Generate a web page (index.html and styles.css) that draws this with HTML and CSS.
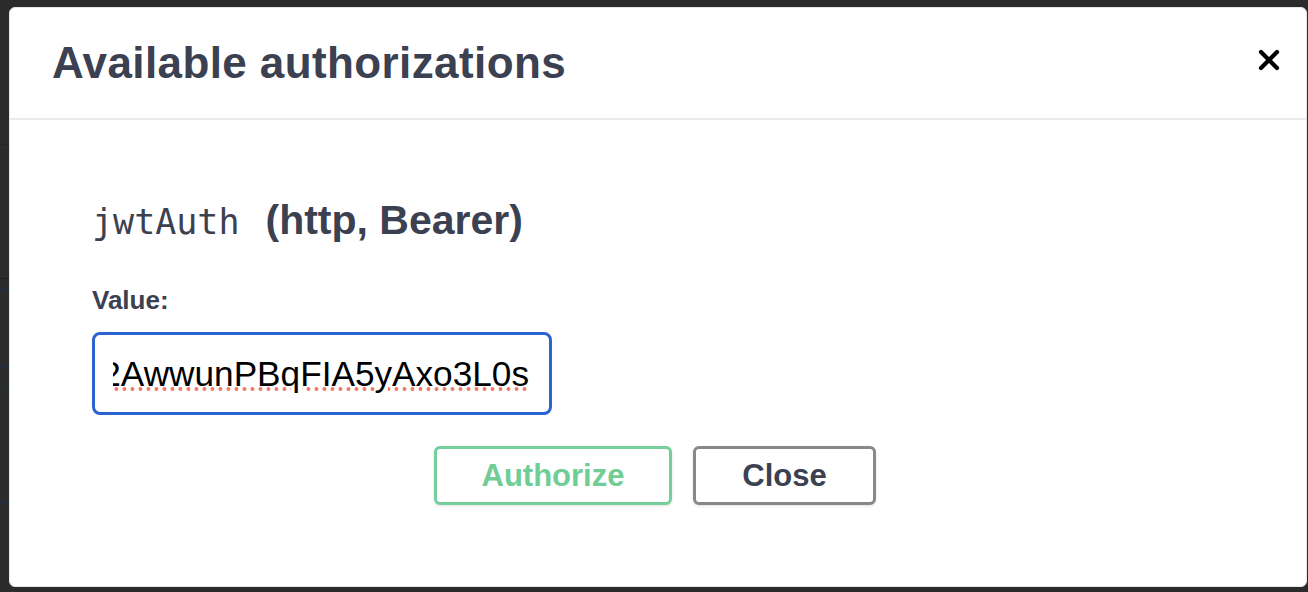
FILE: index.html
```html
<!DOCTYPE html>
<html lang="en">
<head>
<meta charset="utf-8">
<title>Available authorizations</title>
<link rel="stylesheet" href="styles.css">
</head>
<body>
<div class="backdrop">
  <div class="bg-lines">
    <span class="bl bl1"></span>
    <span class="bl bl2"></span>
    <span class="bl bl3"></span>
    <span class="bl bl4"></span>
    <span class="bl bl5"></span>
    <span class="bl bl6"></span>
  </div>
  <div class="modal">
    <div class="modal-header">
      <h3 class="modal-title">Available authorizations</h3>
      <button class="close-x" aria-label="Close">
        <svg width="22" height="22" viewBox="0 0 22 22"><path d="M3 3 L19 19 M19 3 L3 19" stroke="#000" stroke-width="4.2" stroke-linecap="round"/></svg>
      </button>
    </div>
    <div class="modal-body">
      <div class="auth-container">
        <h4 class="scheme"><code class="scheme-name">jwtAuth</code>(http, Bearer)</h4>
        <label class="value-label">Value:</label>
        <div class="input-box">
          <div class="input-clip"><span class="input-text">eyJhbGciOiJIUzI1NiIsInR5cCI6IkpXVCJ9.eyJzdWIiOiIxMjM0NTY3ODkwIiwibmFtZSI6IkpvaG4ifQ.Sfl2AwwunPBqFIA5yAxo3L0s</span></div>
        </div>
        <div class="actions">
          <button class="btn btn-authorize">Authorize</button>
          <button class="btn btn-close">Close</button>
        </div>
      </div>
    </div>
  </div>
</div>
</body>
</html>
```

FILE: styles.css
```css
* { box-sizing: border-box; }
html, body {
  margin: 0;
  padding: 0;
  width: 1308px;
  height: 592px;
  overflow: hidden;
  background: #2b2b2b;
}
.backdrop {
  position: relative;
  width: 1308px;
  height: 592px;
  padding: 7px 1px 5px 9px;
  display: flex;
}
.bg-lines { position: absolute; left: 0; top: 0; width: 9px; height: 592px; }
.bl { position: absolute; left: 0; width: 9px; height: 1px; }
.bl1 { top: 144px; background: #262626; }
.bl2 { top: 278px; background: #1f1f1f; }
.bl3 { top: 289px; background: #1d3050; }
.bl4 { top: 366px; background: #1d3050; }
.bl5 { top: 386px; background: #1b3a22; }
.bl6 { top: 502px; background: #1d3050; }
.modal {
  flex: 1;
  background: #fff;
  border: 1px solid #e6e6e6;
  border-radius: 6px;
  display: flex;
  flex-direction: column;
  font-family: "Liberation Sans", Arial, sans-serif;
  color: #3b4151;
}
.modal-header {
  height: 112px;
  border-bottom: 2px solid #ebebeb;
  display: flex;
  align-items: center;
  justify-content: space-between;
  padding: 0 26px 0 42px;
  flex-shrink: 0;
}
.modal-title {
  margin: 0;
  font-size: 44px;
  font-weight: 700;
  color: #3b4151;
  letter-spacing: 0.4px;
}
.close-x {
  border: 0;
  background: none;
  padding: 0;
  margin-top: -6px;
  width: 22px;
  height: 22px;
  display: flex;
}
.modal-body {
  padding: 76px 88px 0 82px;
}
.auth-container { display: flex; flex-direction: column; align-items: flex-start; }
.scheme {
  margin: 0;
  font-size: 41px;
  font-weight: 700;
  color: #3b4151;
  line-height: 48px;
}
.scheme-name {
  font-family: "DejaVu Sans Mono", monospace;
  font-weight: 400;
  font-size: 35px;
  color: #3b4151;
  margin-right: 26px;
}
.value-label {
  margin-top: 39px;
  font-size: 26px;
  font-weight: 700;
  line-height: 30px;
}
.input-box {
  margin-top: 17px;
  width: 460px;
  height: 83px;
  border: 3px solid #2b63cf;
  border-radius: 8px;
  padding: 0 20px 0 18px;
  display: flex;
  align-items: center;
}
.input-clip {
  flex: 1;
  overflow: hidden;
  display: flex;
  justify-content: flex-end;
  white-space: nowrap;
}
.input-text {
  font-size: 35.2px;
  color: #000;
  line-height: 44px;
  text-decoration-line: underline;
  text-decoration-style: dotted;
  text-decoration-color: #f07a66;
  text-decoration-thickness: 4px;
  text-underline-offset: 2px;
}
.actions {
  margin-top: 31px;
  align-self: stretch;
  display: flex;
  justify-content: center;
  gap: 21px;
}
.btn {
  font-family: "Liberation Sans", Arial, sans-serif;
  font-size: 31px;
  font-weight: 700;
  height: 59px;
  border-radius: 6px;
  background: #fff;
  box-shadow: 0 1px 3px rgba(0,0,0,0.12);
  padding: 0;
}
.btn-authorize {
  width: 238px;
  border: 3px solid #75cf9c;
  color: #6fcd95;
}
.btn-close {
  width: 183px;
  border: 3px solid #888;
  color: #3b4151;
}
```
